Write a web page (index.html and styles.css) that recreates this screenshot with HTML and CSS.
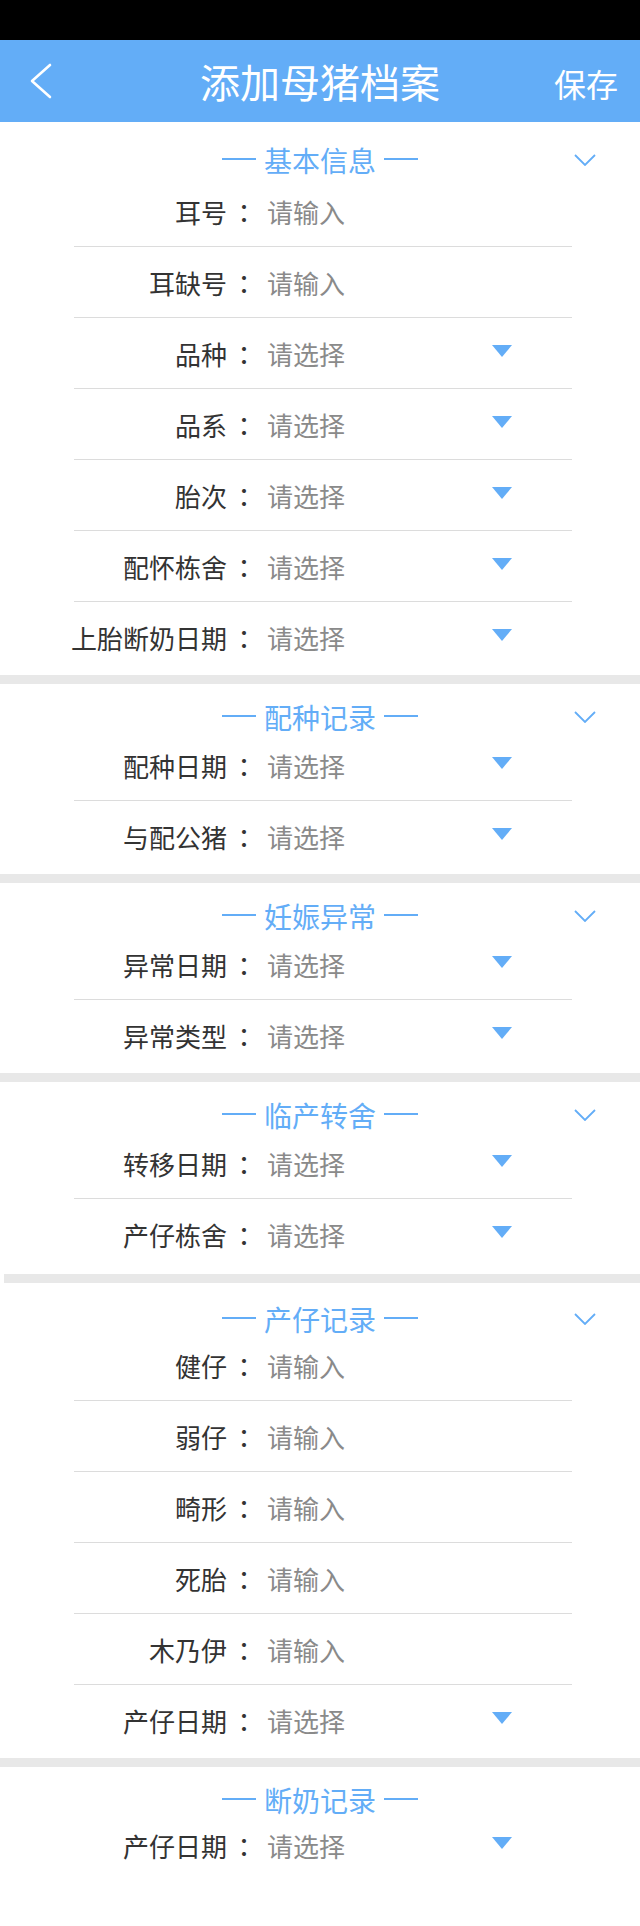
FILE: index.html
```html
<!DOCTYPE html>
<html lang="zh-CN">
<head>
<meta charset="utf-8">
<title>添加母猪档案</title>
<link rel="stylesheet" href="styles.css">
</head>
<body>
<div class="status"></div>
<header class="nav">
  <div class="nav-left">
    <svg class="back" width="22" height="36" viewBox="0 0 22 36"><polyline points="20,2 2,18 20,34" fill="none" stroke="#fff" stroke-width="2.6" stroke-linecap="round" stroke-linejoin="round"/></svg>
  </div>
  <h1 class="nav-title">添加母猪档案</h1>
  <div class="nav-right"><span class="nav-save">保存</span></div>
</header>

<section class="sec sec-first">
  <div class="sec-head">
    <span class="line"></span><span class="sec-title">基本信息</span><span class="line"></span>
    <svg class="chev" width="22" height="12" viewBox="0 0 22 12"><polyline points="1,1 11,11 21,1" fill="none" stroke="#63adf7" stroke-width="1.8"/></svg>
  </div>
  <div class="row"><div class="label"><span>耳号</span></div><span class="colon">：</span><span class="value">请输入</span></div>
  <div class="row"><div class="label"><span>耳缺号</span></div><span class="colon">：</span><span class="value">请输入</span></div>
  <div class="row"><div class="label"><span>品种</span></div><span class="colon">：</span><span class="value">请选择</span><svg class="tri" width="20" height="12" viewBox="0 0 20 12"><polygon points="0,0 20,0 10,12" fill="#63adf7"/></svg></div>
  <div class="row"><div class="label"><span>品系</span></div><span class="colon">：</span><span class="value">请选择</span><svg class="tri" width="20" height="12" viewBox="0 0 20 12"><polygon points="0,0 20,0 10,12" fill="#63adf7"/></svg></div>
  <div class="row"><div class="label"><span>胎次</span></div><span class="colon">：</span><span class="value">请选择</span><svg class="tri" width="20" height="12" viewBox="0 0 20 12"><polygon points="0,0 20,0 10,12" fill="#63adf7"/></svg></div>
  <div class="row"><div class="label"><span>配怀栋舍</span></div><span class="colon">：</span><span class="value">请选择</span><svg class="tri" width="20" height="12" viewBox="0 0 20 12"><polygon points="0,0 20,0 10,12" fill="#63adf7"/></svg></div>
  <div class="row"><div class="label"><span>上胎断奶日期</span></div><span class="colon">：</span><span class="value">请选择</span><svg class="tri" width="20" height="12" viewBox="0 0 20 12"><polygon points="0,0 20,0 10,12" fill="#63adf7"/></svg></div>
</section>
<div class="band"></div>

<section class="sec">
  <div class="sec-head">
    <span class="line"></span><span class="sec-title">配种记录</span><span class="line"></span>
    <svg class="chev" width="22" height="12" viewBox="0 0 22 12"><polyline points="1,1 11,11 21,1" fill="none" stroke="#63adf7" stroke-width="1.8"/></svg>
  </div>
  <div class="row"><div class="label"><span>配种日期</span></div><span class="colon">：</span><span class="value">请选择</span><svg class="tri" width="20" height="12" viewBox="0 0 20 12"><polygon points="0,0 20,0 10,12" fill="#63adf7"/></svg></div>
  <div class="row"><div class="label"><span>与配公猪</span></div><span class="colon">：</span><span class="value">请选择</span><svg class="tri" width="20" height="12" viewBox="0 0 20 12"><polygon points="0,0 20,0 10,12" fill="#63adf7"/></svg></div>
</section>
<div class="band"></div>

<section class="sec">
  <div class="sec-head">
    <span class="line"></span><span class="sec-title">妊娠异常</span><span class="line"></span>
    <svg class="chev" width="22" height="12" viewBox="0 0 22 12"><polyline points="1,1 11,11 21,1" fill="none" stroke="#63adf7" stroke-width="1.8"/></svg>
  </div>
  <div class="row"><div class="label"><span>异常日期</span></div><span class="colon">：</span><span class="value">请选择</span><svg class="tri" width="20" height="12" viewBox="0 0 20 12"><polygon points="0,0 20,0 10,12" fill="#63adf7"/></svg></div>
  <div class="row"><div class="label"><span>异常类型</span></div><span class="colon">：</span><span class="value">请选择</span><svg class="tri" width="20" height="12" viewBox="0 0 20 12"><polygon points="0,0 20,0 10,12" fill="#63adf7"/></svg></div>
</section>
<div class="band"></div>

<section class="sec sec-transfer">
  <div class="sec-head">
    <span class="line"></span><span class="sec-title">临产转舍</span><span class="line"></span>
    <svg class="chev" width="22" height="12" viewBox="0 0 22 12"><polyline points="1,1 11,11 21,1" fill="none" stroke="#63adf7" stroke-width="1.8"/></svg>
  </div>
  <div class="row"><div class="label"><span>转移日期</span></div><span class="colon">：</span><span class="value">请选择</span><svg class="tri" width="20" height="12" viewBox="0 0 20 12"><polygon points="0,0 20,0 10,12" fill="#63adf7"/></svg></div>
  <div class="row"><div class="label"><span>产仔栋舍</span></div><span class="colon">：</span><span class="value">请选择</span><svg class="tri" width="20" height="12" viewBox="0 0 20 12"><polygon points="0,0 20,0 10,12" fill="#63adf7"/></svg></div>
</section>
<div class="band band-inset"></div>

<section class="sec sec-litter">
  <div class="sec-head">
    <span class="line"></span><span class="sec-title">产仔记录</span><span class="line"></span>
    <svg class="chev" width="22" height="12" viewBox="0 0 22 12"><polyline points="1,1 11,11 21,1" fill="none" stroke="#63adf7" stroke-width="1.8"/></svg>
  </div>
  <div class="row"><div class="label"><span>健仔</span></div><span class="colon">：</span><span class="value">请输入</span></div>
  <div class="row"><div class="label"><span>弱仔</span></div><span class="colon">：</span><span class="value">请输入</span></div>
  <div class="row"><div class="label"><span>畸形</span></div><span class="colon">：</span><span class="value">请输入</span></div>
  <div class="row"><div class="label"><span>死胎</span></div><span class="colon">：</span><span class="value">请输入</span></div>
  <div class="row"><div class="label"><span>木乃伊</span></div><span class="colon">：</span><span class="value">请输入</span></div>
  <div class="row"><div class="label"><span>产仔日期</span></div><span class="colon">：</span><span class="value">请选择</span><svg class="tri" width="20" height="12" viewBox="0 0 20 12"><polygon points="0,0 20,0 10,12" fill="#63adf7"/></svg></div>
</section>
<div class="band"></div>

<section class="sec sec-last">
  <div class="sec-head">
    <span class="line"></span><span class="sec-title">断奶记录</span><span class="line"></span>
  </div>
  <div class="row"><div class="label"><span>产仔日期</span></div><span class="colon">：</span><span class="value">请选择</span><svg class="tri" width="20" height="12" viewBox="0 0 20 12"><polygon points="0,0 20,0 10,12" fill="#63adf7"/></svg></div>
</section>
</body>
</html>
```

FILE: styles.css
```css
* { box-sizing: border-box; }
html, body {
  margin: 0;
  padding: 0;
  background: #fff;
}
body {
  width: 640px;
  min-height: 1926px;
  font-family: "Noto Sans CJK SC", "Noto Sans", sans-serif;
  color: #333;
}
.status {
  height: 40px;
  background: #000;
}
.nav {
  height: 82px;
  background: #63adf7;
  display: grid;
  grid-template-columns: 1fr auto 1fr;
  align-items: center;
}
.nav-left {
  padding-left: 30px;
  display: flex;
  align-items: center;
}
.back { display: block; }
.nav-title {
  margin: 0;
  font-size: 40px;
  line-height: 1;
  font-weight: normal;
  color: #fff;
}
.nav-right {
  display: flex;
  justify-content: flex-end;
  padding-right: 22px;
  padding-top: 4px;
}
.nav-save {
  font-size: 32px;
  line-height: 1;
  color: #fff;
}
.sec {
  background: #fff;
  padding-bottom: 2px;
}
.sec-first { padding-top: 5px; }
.sec-head {
  position: relative;
  height: 46px;
  padding-top: 20px;
  display: flex;
  justify-content: center;
  align-items: flex-start;
}
.sec-first .sec-head { height: 49px; }
.sec-transfer { padding-bottom: 4px; }
.sec-litter { padding-top: 3px; }
.sec-litter .sec-head { height: 44px; }
.sec-title {
  font-size: 28px;
  line-height: 26px;
  height: 26px;
  color: #63adf7;
}
.line {
  width: 34px;
  height: 1.5px;
  background: #63adf7;
  margin: 11px 8px 0;
}
.chev {
  position: absolute;
  left: 574px;
  top: 27px;
}
.row {
  margin-left: 74px;
  width: 498px;
  height: 71px;
  padding-top: 1px;
  border-bottom: 1px solid #dcdcdc;
  display: flex;
  align-items: center;
  font-size: 26px;
  line-height: 1;
}
.row:last-child { border-bottom: none; }
.label {
  width: 153px;
  flex-shrink: 0;
  display: flex;
  justify-content: flex-end;
  white-space: nowrap;
  color: #333;
}
.colon {
  width: 30px;
  padding-left: 4px;
  flex-shrink: 0;
  text-align: center;
  color: #333;
  font-family: "Noto Sans CJK TC", "Noto Sans CJK SC", sans-serif;
}
.value {
  margin-left: 10px;
  color: #8a8a8a;
  white-space: nowrap;
}
.tri {
  margin-left: auto;
  margin-right: 60px;
  margin-bottom: 6px;
  flex-shrink: 0;
}
.band {
  height: 9px;
  background: #e8e8e8;
}
.band-inset { margin-left: 4px; }
.sec-last { padding-bottom: 0; }
.sec-last .sec-head { height: 43px; }
```
